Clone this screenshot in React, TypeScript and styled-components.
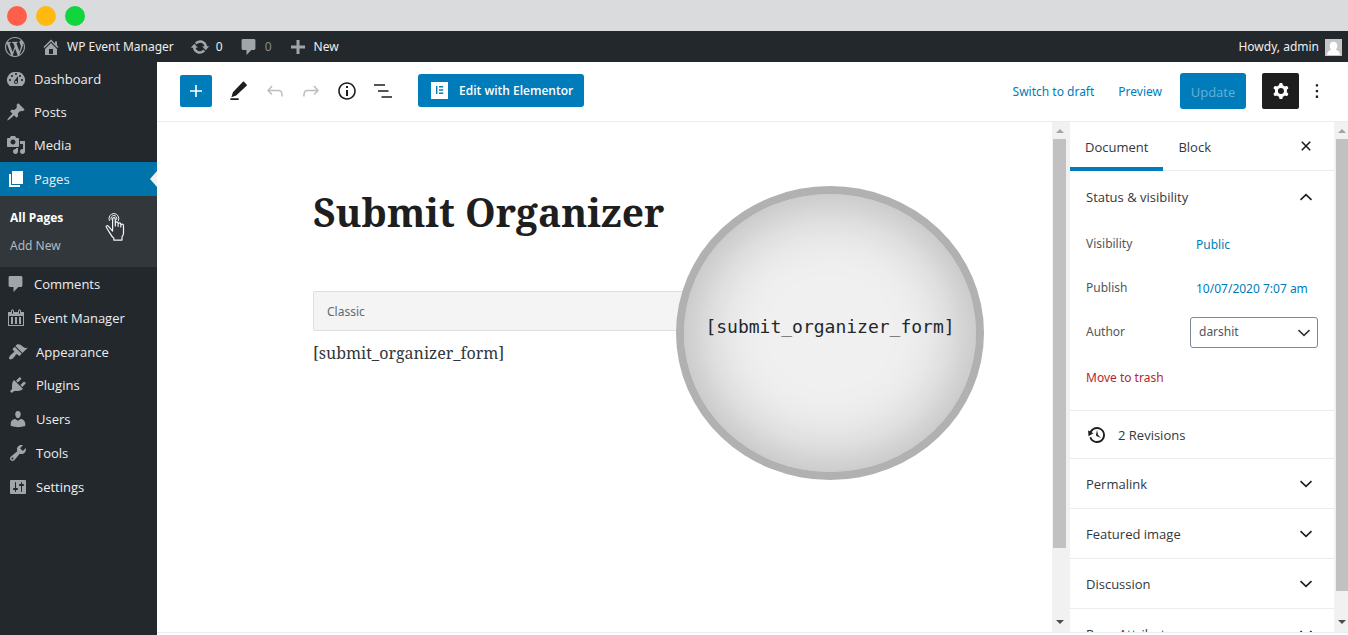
import React, { ReactNode } from "react";
import styled, { createGlobalStyle } from "styled-components";

const GlobalStyle = createGlobalStyle`
  *, *::before, *::after { box-sizing: border-box; }
  body {
    margin: 0;
    font-family: "Noto Sans", "Open Sans", sans-serif;
    font-size: 12px;
    line-height: 20px;
    color: #32373c;
    background: #fff;
  }
  button, select { font: inherit; color: inherit; }
  button { border: 0; padding: 0; background: none; cursor: pointer; }
  a { text-decoration: none; color: inherit; }
  ul { list-style: none; margin: 0; padding: 0; }
  svg { display: block; flex: none; }
`;

const paths = {
  wordpress:
    "M20 10c0-5.51-4.49-10-10-10C4.48 0 0 4.49 0 10c0 5.52 4.48 10 10 10 5.51 0 10-4.48 10-10zM7.78 15.37L4.37 6.22c.55-.02 1.17-.08 1.17-.08.5-.06.44-1.13-.06-1.11 0 0-1.45.11-2.37.11-.18 0-.37 0-.58-.01C4.12 2.69 6.87 1.11 10 1.11c2.33 0 4.45.87 6.05 2.34-.68-.11-1.65.39-1.65 1.58 0 .74.45 1.36.9 2.1.35.61.55 1.36.55 2.46 0 1.49-1.4 5-1.4 5l-3.03-8.37c.54-.02.82-.17.82-.17.5-.05.44-1.25-.06-1.22 0 0-1.44.12-2.38.12-.87 0-2.33-.12-2.33-.12-.5-.03-.56 1.2-.06 1.22l.92.08 1.26 3.41zM17.41 10c.24-.64.74-1.87.43-4.25.7 1.29 1.05 2.71 1.05 4.25 0 3.29-1.73 6.24-4.4 7.78.97-2.59 1.94-5.2 2.92-7.78zM6.1 18.09C3.12 16.65 1.11 13.53 1.11 10c0-1.3.23-2.48.72-3.59C3.25 10.3 4.67 14.2 6.1 18.09zm4.03-6.63l2.58 6.98c-.86.29-1.76.45-2.71.45-.79 0-1.57-.11-2.29-.33.81-2.38 1.62-4.74 2.42-7.1z",
  home: "M16 8.5l1.53 1.53-1.06 1.06L10 4.6l-6.47 6.49-1.06-1.06L10 2.5l4 4v-2h2v4zm-6-2.46l6 5.99V18H4v-5.97zM12 17v-5H8v5h4z",
  update:
    "M10.2 3.28c3.53 0 6.43 2.61 6.92 6h2.08l-3.5 4-3.5-4h2.32c-.45-1.97-2.21-3.45-4.32-3.45-1.45 0-2.73.71-3.54 1.78L4.95 5.66C6.23 4.2 8.11 3.28 10.2 3.28zm-.4 13.44c-3.52 0-6.43-2.61-6.92-6H.8l3.5-4c1.17 1.33 2.33 2.67 3.5 4H5.48c.45 1.97 2.21 3.45 4.32 3.45 1.45 0 2.73-.71 3.54-1.78l1.71 1.95c-1.28 1.46-3.15 2.38-5.25 2.38z",
  comments:
    "M4 2h11c.8 0 1.4.6 1.4 1.4v8.2c0 .8-.6 1.4-1.4 1.4h-2.6l-4.9 5v-5H4c-.8 0-1.4-.6-1.4-1.4V3.4C2.6 2.6 3.2 2 4 2z",
  plus: "M17 8.5v3h-5.5v5.5h-3v-5.5H3v-3h5.5V3h3v5.5z",
  dashboard:
    "M3.76 17h12.48A7.998 7.998 0 0 0 10 3a8 8 0 0 0-6.24 14zM10 4c.55 0 1 .45 1 1s-.45 1-1 1-1-.45-1-1 .45-1 1-1zM6 6c.55 0 1 .45 1 1s-.45 1-1 1-1-.45-1-1 .45-1 1-1zm8 0c.55 0 1 .45 1 1s-.45 1-1 1-1-.45-1-1 .45-1 1-1zm-5.37 5.55L12 7v6c0 1.1-.9 2-2 2s-2-.9-2-2c0-.57.24-1.08.63-1.45zM4 10c.55 0 1 .45 1 1s-.45 1-1 1-1-.45-1-1 .45-1 1-1zm12 0c.55 0 1 .45 1 1s-.45 1-1 1-1-.45-1-1 .45-1 1-1zm-5 3c0-.55-.45-1-1-1s-1 .45-1 1 .45 1 1 1 1-.45 1-1z",
  pin: "M10.44 3.02l1.82-1.82 6.36 6.35-1.83 1.82c-1.05-.68-2.48-.57-3.41.36l-.75.75c-.92.93-1.04 2.35-.35 3.41l-1.83 1.82-2.41-2.41-2.8 2.79c-.42.42-3.38 2.71-3.8 2.29s1.86-3.39 2.28-3.81l2.79-2.79L4.1 9.36l1.83-1.82c1.05.69 2.48.57 3.4-.36l.75-.75c.93-.92 1.05-2.35.36-3.41z",
  media:
    "M13 11V4c0-.55-.45-1-1-1h-1.67L9 1H5L3.67 3H2c-.55 0-1 .45-1 1v7c0 .55.45 1 1 1h10c.55 0 1-.45 1-1zM7 4.5c1.38 0 2.5 1.12 2.5 2.5S8.38 9.5 7 9.5 4.5 8.38 4.5 7 5.62 4.5 7 4.5zM14 6h5v10.5c0 1.38-1.12 2.5-2.5 2.5S14 17.88 14 16.5s1.12-2.5 2.5-2.5c.17 0 .34.02.5.05V9h-3V6zm-4 8.05V13h2v3.5c0 1.38-1.12 2.5-2.5 2.5S7 17.88 7 16.5 8.12 14 9.5 14c.17 0 .34.02.5.05z",
  page: "M6 15V2h11v13H6zm-1 1h9v2H3V5h2v11z",
  calendar:
    "M15 4h3v14H2V4h3V3c0-.83.67-1.5 1.5-1.5S8 2.17 8 3v1h4V3c0-.83.67-1.5 1.5-1.5S15 2.17 15 3v1zM6 3v2.5c0 .28.22.5.5.5s.5-.22.5-.5V3c0-.28-.22-.5-.5-.5S6 2.72 6 3zm7 0v2.5c0 .28.22.5.5.5s.5-.22.5-.5V3c0-.28-.22-.5-.5-.5s-.5.22-.5.5zm4 14V8H3v9h14zM7 16V9H5v7h2zm4 0V9H9v7h2zm4 0V9h-2v7h2z",
  appearance:
    "M14.48 11.06L7.41 3.99l1.5-1.5c.5-.56 2.3-.47 3.51.32 1.21.8 1.43 1.28 2.91 2.1 1.18.64 2.45 1.26 4.45.85zm-.71.71L6.7 4.7 4.93 6.47c-.39.39-.39 1.02 0 1.41l1.06 1.06c.39.39.39 1.03 0 1.42-.6.6-1.43 1.11-2.21 1.69-.35.26-.7.53-1.01.84C1.43 14.23.4 16.08 1.4 17.07c.99 1 2.84-.03 4.18-1.36.31-.31.58-.66.85-1.02.57-.78 1.08-1.61 1.69-2.21.39-.39 1.02-.39 1.41 0l1.06 1.06c.39.39 1.02.39 1.41 0z",
  plugins:
    "M13.11 4.36L9.87 7.6 8 5.73l3.24-3.24c.35-.34 1.05-.2 1.56.32.52.51.66 1.21.31 1.55zm-8 1.77l.91-1.12 9.01 9.01-1.19.84c-.71.71-2.63 1.16-3.82 1.16H6.14L4.9 17.26c-.59.59-1.54.59-2.12 0-.59-.58-.59-1.53 0-2.12l1.24-1.24v-3.88c0-1.13.4-3.19 1.09-3.89zm7.26 3.97l3.24-3.24c.34-.35 1.04-.21 1.55.31.52.51.66 1.21.31 1.55l-3.24 3.25z",
  users:
    "M10 9.25c-2.27 0-2.73-3.44-2.73-3.44C7 4.02 7.82 2 9.97 2c2.16 0 2.98 2.02 2.71 3.81 0 0-.41 3.44-2.68 3.44zm0 2.57L12.72 10c2.39 0 4.52 2.33 4.52 4.53v2.49s-3.65 1.13-7.24 1.13c-3.65 0-7.24-1.13-7.24-1.13v-2.49c0-2.25 1.94-4.48 4.47-4.48z",
  tools:
    "M16.68 9.77c-1.34 1.34-3.3 1.67-4.95.99l-5.41 6.52c-.99.99-2.59.99-3.58 0s-.99-2.59 0-3.57l6.52-5.42c-.68-1.65-.35-3.61.99-4.95 1.28-1.28 3.12-1.62 4.72-1.06l-2.89 2.89 2.82 2.82 2.86-2.87c.53 1.58.18 3.39-1.08 4.65zM3.81 16.21c.4.39 1.04.39 1.43 0 .4-.4.4-1.04 0-1.43-.39-.4-1.03-.4-1.43 0-.39.39-.39 1.03 0 1.43z",
  settings:
    "M18 16V4c0-.55-.45-1-1-1H3c-.55 0-1 .45-1 1v12c0 .55.45 1 1 1h14c.55 0 1-.45 1-1zM8 11h1c.55 0 1 .45 1 1s-.45 1-1 1H8v1.5c0 .28-.22.5-.5.5s-.5-.22-.5-.5V13H6c-.55 0-1-.45-1-1s.45-1 1-1h1V5.5c0-.28.22-.5.5-.5s.5.22.5.5V11zm5-2h-1c-.55 0-1-.45-1-1s.45-1 1-1h1V5.5c0-.28.22-.5.5-.5s.5.22.5.5V7h1c.55 0 1 .45 1 1s-.45 1-1 1h-1v5.5c0 .28-.22.5-.5.5s-.5-.22-.5-.5V9z",
  backup:
    "M13.65 2.88c3.93 2.01 5.48 6.84 3.47 10.77s-6.83 5.48-10.77 3.47c-1.87-.96-3.2-2.56-3.86-4.4l1.64-1.03c.45 1.57 1.52 2.95 3.08 3.76 3.01 1.54 6.69.35 8.23-2.66 1.55-3.01.36-6.69-2.65-8.24C9.78 3.01 6.1 4.2 4.56 7.21l1.88.97-4.95 3.08-.39-5.82 1.78.91C4.9 2.4 9.75.89 13.65 2.88zm-4.36 7.83C9.11 10.53 9 10.28 9 10c0-.07.03-.12.04-.19h-.01L10 5l.97 4.81L14 13l-4.5-2.12.02-.02c-.08-.04-.16-.09-.23-.15z",
};

type IconName = keyof typeof paths;

const Icon = ({ name, size = 20 }: { name: IconName; size?: number }) => (
  <svg width={size} height={size} viewBox="0 0 20 20" fill="currentColor" fillRule="evenodd" aria-hidden="true">
    <path d={paths[name]} />
  </svg>
);

const EditorIcon = ({ size = 24, children }: { size?: number; children: ReactNode }) => (
  <svg width={size} height={size} viewBox="0 0 24 24" fill="currentColor" fillRule="evenodd" aria-hidden="true">
    {children}
  </svg>
);

const Chevron = ({ up = false }: { up?: boolean }) => (
  <svg width="14" height="10" viewBox="0 0 14 10" fill="none" stroke="currentColor" strokeWidth="1.6" aria-hidden="true">
    <path d={up ? "M1.5 7.8L7 2.6l5.5 5.2" : "M1.5 2.2L7 7.4l5.5-5.2"} />
  </svg>
);

/* Frame */

const Screen = styled.div`
  display: flex;
  flex-direction: column;
  height: 100vh;
  overflow: hidden;
`;

const WindowBar = styled.div`
  display: flex;
  align-items: center;
  gap: 9px;
  flex: none;
  height: 31px;
  padding-left: 7px;
  background: #dadbdd;
`;

const Light = styled.span<{ $color: string }>`
  width: 20px;
  height: 20px;
  border-radius: 50%;
  background: ${(p) => p.$color};
`;

const AdminBar = styled.header`
  display: flex;
  align-items: center;
  justify-content: space-between;
  flex: none;
  height: 31px;
  padding: 0 6px 0 5px;
  background: #23282d;
  color: #eee;
`;

const AdminGroup = styled.nav`
  display: flex;
  align-items: center;
  gap: 16px;
`;

const AdminLink = styled.a<{ $dim?: boolean }>`
  display: flex;
  align-items: center;
  gap: 6px;
  padding-top: 1px;
  color: ${(p) => (p.$dim ? "#8a8e92" : "#eee")};
  svg { color: #a0a5aa; }
`;

const Body = styled.div`
  display: flex;
  flex: 1;
  min-height: 0;
`;

/* Admin menu */

const Menu = styled.nav`
  flex: none;
  width: 157px;
  background: #23282d;
  color: #eee;
`;

const MenuLink = styled.a<{ $short?: boolean; $inset?: boolean; $current?: boolean }>`
  position: relative;
  display: flex;
  align-items: center;
  gap: 8px;
  height: ${(p) => (p.$short ? 33 : 34)}px;
  padding-left: ${(p) => (p.$inset ? 8 : 6)}px;
  font-family: "Open Sans", "Noto Sans", sans-serif;
  font-size: 13px;
  background: ${(p) => (p.$current ? "#0073aa" : "transparent")};
  svg { color: ${(p) => (p.$current ? "#fff" : "#a0a5aa")}; }
  &::after {
    content: "";
    display: ${(p) => (p.$current ? "block" : "none")};
    position: absolute;
    right: 0;
    top: 9px;
    border: 8px solid transparent;
    border-left: 0;
    border-right: 7px solid #f1f1f1;
  }
`;

const SubMenu = styled.ul`
  position: relative;
  height: 71px;
  padding: 8px 10px;
  background: #32373c;
`;

const SubLink = styled.a<{ $current?: boolean }>`
  display: block;
  line-height: 28px;
  font-family: ${(p) => (p.$current ? '"Open Sans"' : '"Noto Sans"')}, sans-serif;
  font-weight: ${(p) => (p.$current ? 700 : 400)};
  color: ${(p) => (p.$current ? "#fff" : "#b4b9be")};
`;

const Pointer = styled.svg`
  position: absolute;
  top: 17px;
  right: 32px;
`;

/* Editor */

const Editor = styled.main`
  display: flex;
  flex-direction: column;
  flex: 1;
  min-width: 0;
  padding-bottom: 2px;
  background: #fff;
`;

const Toolbar = styled.div`
  display: flex;
  align-items: center;
  justify-content: space-between;
  flex: none;
  height: 60px;
  padding: 0 19px 2px 23px;
  border-bottom: 1px solid #ebecee;
`;

const ToolGroup = styled.div`
  display: flex;
  align-items: center;
`;

const InsertButton = styled.button`
  display: grid;
  place-items: center;
  width: 32px;
  height: 32px;
  margin-right: 9px;
  border-radius: 2px;
  background: #007cba;
  color: #fff;
`;

const ToolButton = styled.button<{ $off?: boolean }>`
  display: grid;
  place-items: center;
  width: 36px;
  height: 36px;
  color: ${(p) => (p.$off ? "#bdbdbd" : "#1e1e1e")};
`;

const ElementorButton = styled.button`
  display: flex;
  align-items: center;
  gap: 11px;
  width: 166px;
  height: 33px;
  margin-left: 17px;
  padding-left: 13px;
  border-radius: 3px;
  background: #007cba;
  color: #fff;
  font-family: "Open Sans", "Noto Sans", sans-serif;
  font-weight: 600;
`;

const TextButton = styled.button`
  margin-right: 24px;
  padding-top: 3px;
  color: #007cba;
`;

const UpdateButton = styled.button`
  width: 66px;
  height: 36px;
  margin: 0 16px 0 -6px;
  padding-top: 2px;
  border-radius: 3px;
  background: #007cba;
  color: #66b0d6;
  font-family: "Open Sans", "Noto Sans", sans-serif;
  font-size: 13px;
`;

const GearButton = styled.button`
  display: grid;
  place-items: center;
  width: 37px;
  height: 36px;
  margin-right: 6px;
  border-radius: 2px;
  background: #1e1e1e;
  color: #fff;
`;

const MoreButton = styled.button`
  display: grid;
  place-items: center;
  width: 24px;
  height: 36px;
  color: #1e1e1e;
`;

const Workspace = styled.div`
  display: flex;
  flex: 1;
  min-height: 0;
  border-bottom: 1px solid #ebecee;
`;

const Canvas = styled.section`
  position: relative;
  flex: 1;
  min-width: 0;
  padding: 62px 156px 0;
`;

const Title = styled.h1`
  margin: 0;
  font: 700 39px/56px "Noto Serif", "Liberation Serif", serif;
  color: #1e1e1e;
`;

const ClassicBar = styled.div`
  height: 40px;
  margin-top: 51px;
  padding: 1px 0 0 13px;
  border: 1px solid #dcdee0;
  border-radius: 2px;
  background: #f4f4f4;
  color: #626a72;
  line-height: 38px;
`;

const Paragraph = styled.p`
  margin: 8px 0 0;
  font: 16px/28px "Noto Serif", "Liberation Serif", serif;
  color: #32373c;
`;

const Lens = styled.div`
  position: absolute;
  top: 64px;
  right: 68px;
  display: grid;
  place-items: center;
  width: 308px;
  height: 294px;
  padding-bottom: 12px;
  border: 8px solid #b1b1b1;
  border-radius: 50%;
  background: #f0f0f0;
  box-shadow: inset 0 0 72px rgba(0, 0, 0, 0.28);
  font: 18px/24px "DejaVu Sans Mono", "Liberation Mono", monospace;
  color: #23282d;
`;

const Scroll = styled.div<{ $wide?: boolean }>`
  display: flex;
  flex-direction: column;
  align-items: center;
  flex: none;
  width: ${(p) => (p.$wide ? 18 : 14)}px;
  padding: ${(p) => (p.$wide ? "7px 4px 8px 1px" : "7px 0 8px 2px")};
  background: #f1f1f1;
`;

const Thumb = styled.div<{ $share: number }>`
  width: 100%;
  flex: ${(p) => p.$share};
  margin-top: 6px;
  background: #c1c1c1;
`;

const Gap = styled.div<{ $share: number }>`
  flex: ${(p) => p.$share};
`;

const Arrow = styled.span<{ $down?: boolean }>`
  border: 4px solid transparent;
  border-top: ${(p) => (p.$down ? "4px solid #4d4d4d" : "0")};
  border-bottom: ${(p) => (p.$down ? "0" : "4px solid #a3a3a3")};
`;

/* Settings panel */

const Panel = styled.aside`
  flex: none;
  width: 264px;
  overflow: hidden;
  color: #32373c;
`;

const Tabs = styled.div`
  display: flex;
  align-items: center;
  height: 49px;
  border-bottom: 1px solid #ebecee;
`;

const Tab = styled.button<{ $active?: boolean }>`
  height: 49px;
  padding: ${(p) => (p.$active ? "5px 15px 0" : "1px 15px 0")};
  border-bottom: ${(p) => (p.$active ? "4px solid #007cba" : "0")};
  font-family: "Open Sans", "Noto Sans", sans-serif;
  font-size: 13px;
`;

const CloseButton = styled.button`
  display: grid;
  place-items: center;
  width: 24px;
  height: 24px;
  margin: 0 16px 0 auto;
  color: #1e1e1e;
`;

const Section = styled.section`
  padding: 0 16px;
  border-bottom: 1px solid #ebecee;
`;

const SectionToggle = styled.button<{ $open?: boolean }>`
  display: flex;
  align-items: center;
  justify-content: space-between;
  width: 100%;
  height: ${(p) => (p.$open ? 51 : 49)}px;
  padding-right: 5px;
  font-family: "Open Sans", "Noto Sans", sans-serif;
  font-size: 13px;
  text-align: left;
  svg { color: #1e1e1e; }
`;

const Row = styled.div`
  display: flex;
  align-items: center;
  height: 44px;
`;

const RowLabel = styled.label`
  flex: 1;
  color: #50565c;
`;

const RowValue = styled.button`
  width: 122px;
  padding-top: 2px;
  text-align: left;
  color: #007cba;
`;

const SelectBox = styled.div`
  position: relative;
  width: 128px;
  svg {
    position: absolute;
    right: 7px;
    top: 11px;
    pointer-events: none;
  }
`;

const Select = styled.select`
  appearance: none;
  width: 100%;
  height: 31px;
  padding: 0 24px 0 8px;
  border: 1px solid #7e8993;
  border-radius: 3px;
  background: #fff;
  color: #50565c;
`;

const TrashButton = styled.button`
  display: block;
  height: 20px;
  margin: 14px 0 22px;
  color: #b52727;
`;

const Revisions = styled.button`
  display: flex;
  align-items: center;
  gap: 11px;
  height: 47px;
  padding-left: 1px;
  font-family: "Open Sans", "Noto Sans", sans-serif;
  font-size: 13px;
  svg { color: #1e1e1e; }
`;

type MenuEntry = { label: string; icon: IconName; short?: boolean; inset?: boolean };

const upperMenu: MenuEntry[] = [
  { label: "Dashboard", icon: "dashboard", short: true },
  { label: "Posts", icon: "pin", short: true },
  { label: "Media", icon: "media" },
];

const lowerMenu: MenuEntry[] = [
  { label: "Comments", icon: "comments" },
  { label: "Event Manager", icon: "calendar" },
  { label: "Appearance", icon: "appearance", short: true, inset: true },
  { label: "Plugins", icon: "plugins", inset: true },
  { label: "Users", icon: "users", inset: true },
  { label: "Tools", icon: "tools", inset: true },
  { label: "Settings", icon: "settings", inset: true },
];

const MenuItem = ({ entry }: { entry: MenuEntry }) => (
  <li>
    <MenuLink href="#" $short={entry.short} $inset={entry.inset}>
      <Icon name={entry.icon} />
      {entry.label}
    </MenuLink>
  </li>
);

const undoPath =
  "M18.3 11.7c-.6-.6-1.4-.9-2.3-.9H6.7l2.9-3.3-1.1-1-4.5 5L8.5 16l1-1-2.7-2.7H16c.5 0 .9.2 1.3.5 1 1 1 3.4 1 4.5v.3h1.5v-.2c0-1.5 0-4.3-1.5-5.7z";

function AdminMenu() {
  return (
    <Menu aria-label="Main menu">
      <ul>
        {upperMenu.map((m) => <MenuItem key={m.label} entry={m} />)}
        <li>
          <MenuLink href="#" $current>
            <Icon name="page" />
            Pages
          </MenuLink>
          <SubMenu>
            <li><SubLink href="#" $current>All Pages</SubLink></li>
            <li><SubLink href="#">Add New</SubLink></li>
            <Pointer width="20" height="29" viewBox="0 0 20 29" fill="none" stroke="#f4f4f4" strokeWidth="1.2" strokeLinejoin="round" strokeLinecap="round" aria-hidden="true">
              <path d="M4.3 7.5a5 5 0 1 1 9.2 0M6 6.3a3 3 0 1 1 5.8 0" strokeWidth="1" />
              <path d="M7.6 17.5V6a1.3 1.3 0 0 1 2.7 0v7V10.3a1.4 1.4 0 0 1 2.8 0v3-2a1.3 1.3 0 0 1 2.7 0v2.6-1.4a1.3 1.3 0 0 1 2.7 0v7.8c0 1.7-.6 2.5-1.5 3.6v3.2H8.8v-2.2c-1.8-1-2.8-2.7-3.9-4.8L1.3 14.3c-.6-1.5 1-2.2 2-1.2l4.3 5" />
            </Pointer>
          </SubMenu>
        </li>
        {lowerMenu.map((m) => <MenuItem key={m.label} entry={m} />)}
      </ul>
    </Menu>
  );
}

function EditorToolbar() {
  return (
    <Toolbar>
      <ToolGroup>
        <InsertButton aria-label="Add block">
          <svg width="12" height="12" viewBox="0 0 12 12" stroke="currentColor" strokeWidth="1.6"><path d="M6 0v12M0 6h12" /></svg>
        </InsertButton>
        <ToolButton aria-label="Edit">
          <EditorIcon>
            <path d="M17 2.8l2.6 2.6c.5.5.5.8 0 1.3L9.2 16.6 4.4 18.2l1.5-4.9L15.7 2.9c.5-.5.9-.5 1.3-.1zM3.4 19.3h8.3v1.6H3.4z" />
          </EditorIcon>
        </ToolButton>
        <ToolButton aria-label="Undo" $off>
          <EditorIcon><path d={undoPath} /></EditorIcon>
        </ToolButton>
        <ToolButton aria-label="Redo" $off>
          <EditorIcon><path d={undoPath} transform="translate(24 0) scale(-1 1)" /></EditorIcon>
        </ToolButton>
        <ToolButton aria-label="Details">
          <EditorIcon>
            <path d="M12 3.2c-4.8 0-8.8 3.9-8.8 8.8 0 4.8 3.9 8.8 8.8 8.8 4.8 0 8.8-3.9 8.8-8.8 0-4.8-4-8.8-8.8-8.8zm0 16c-4 0-7.2-3.3-7.2-7.2C4.8 8 8 4.8 12 4.8s7.2 3.3 7.2 7.2c0 4-3.2 7.2-7.2 7.2zM11 17h2v-6h-2v6zm0-8h2V7h-2v2z" />
          </EditorIcon>
        </ToolButton>
        <ToolButton aria-label="Outline">
          <EditorIcon><path d="M3 5.2h11v1.5H3zM7 11.2h10.5v1.5H7zM10.5 17.2H21v1.5H10.5z" /></EditorIcon>
        </ToolButton>
        <ElementorButton>
          <svg width="17" height="17" viewBox="0 0 17 17" aria-hidden="true">
            <path fill="#fff" d="M0 0h17v17H0z" />
            <path fill="#007cba" d="M5 4h1.4v8H5zM8 4h4.2v1.4H8zM8 7.3h4.2v1.4H8zM8 10.6h4.2v1.4H8z" />
          </svg>
          Edit with Elementor
        </ElementorButton>
      </ToolGroup>
      <ToolGroup>
        <TextButton>Switch to draft</TextButton>
        <TextButton>Preview</TextButton>
        <UpdateButton>Update</UpdateButton>
        <GearButton aria-label="Settings">
          <EditorIcon>
            <path d="M10.289 4.836A1 1 0 0111.275 4h1.306a1 1 0 01.987.836l.244 1.466c.787.26 1.503.679 2.108 1.218l1.393-.522a1 1 0 011.216.437l.653 1.13a1 1 0 01-.23 1.273l-1.148.944a6.025 6.025 0 010 2.435l1.149.946a1 1 0 01.23 1.272l-.653 1.13a1 1 0 01-1.216.437l-1.394-.522c-.605.54-1.32.958-2.108 1.218l-.244 1.466a1 1 0 01-.987.836h-1.306a1 1 0 01-.986-.836l-.244-1.466a5.995 5.995 0 01-2.108-1.218l-1.394.522a1 1 0 01-1.217-.436l-.653-1.131a1 1 0 01.23-1.272l1.149-.946a6.026 6.026 0 010-2.435l-1.148-.944a1 1 0 01-.23-1.272l.653-1.131a1 1 0 011.217-.437l1.393.522a5.994 5.994 0 012.108-1.218l.244-1.466zM14.929 12a3 3 0 11-6 0 3 3 0 016 0z" />
          </EditorIcon>
        </GearButton>
        <MoreButton aria-label="Options">
          <svg width="4" height="16" viewBox="0 0 4 16" fill="currentColor"><path d="M.8 1.2h2.3v2.3H.8zM.8 6.9h2.3v2.3H.8zM.8 12.6h2.3v2.3H.8z" /></svg>
        </MoreButton>
      </ToolGroup>
    </Toolbar>
  );
}

function SettingsPanel() {
  return (
    <Panel>
      <Tabs>
        <Tab $active>Document</Tab>
        <Tab>Block</Tab>
        <CloseButton aria-label="Close settings">
          <svg width="10" height="10" viewBox="0 0 10 10" stroke="currentColor" strokeWidth="1.6"><path d="M.8.8l8.4 8.4M9.2.8L.8 9.2" /></svg>
        </CloseButton>
      </Tabs>
      <Section>
        <SectionToggle $open>Status &amp; visibility<Chevron up /></SectionToggle>
        <Row>
          <RowLabel htmlFor="visibility">Visibility</RowLabel>
          <RowValue id="visibility">Public</RowValue>
        </Row>
        <Row>
          <RowLabel htmlFor="publish">Publish</RowLabel>
          <RowValue id="publish">10/07/2020 7:07 am</RowValue>
        </Row>
        <Row>
          <RowLabel htmlFor="author">Author</RowLabel>
          <SelectBox>
            <Select id="author" defaultValue="darshit"><option>darshit</option></Select>
            <Chevron />
          </SelectBox>
        </Row>
        <TrashButton>Move to trash</TrashButton>
      </Section>
      <Section>
        <Revisions><Icon name="backup" />2 Revisions</Revisions>
      </Section>
      {["Permalink", "Featured image", "Discussion", "Page Attributes"].map((s) => (
        <Section key={s}>
          <SectionToggle>{s}<Chevron /></SectionToggle>
        </Section>
      ))}
    </Panel>
  );
}

const Avatar = () => (
  <svg width="17" height="17" viewBox="0 0 17 17" aria-hidden="true">
    <path fill="#c6c6c6" d="M0 0h17v17H0z" />
    <path fill="#fff" d="M8.5 2.8c2.5 0 3.8 1.8 3.8 4 0 1.7-.7 3-1.5 3.9 2.4.7 4 2.2 4.2 5.3H2c.2-3.1 1.8-4.6 4.2-5.3-.8-.9-1.5-2.2-1.5-3.9 0-2.2 1.3-4 3.8-4z" />
  </svg>
);

export default function App() {
  return (
    <>
      <GlobalStyle />
      <Screen>
        <WindowBar>
          <Light $color="#ff5f4a" />
          <Light $color="#ffb90f" />
          <Light $color="#10d53c" />
        </WindowBar>
        <AdminBar>
          <AdminGroup aria-label="Toolbar">
            <AdminLink href="#" aria-label="About WordPress"><Icon name="wordpress" /></AdminLink>
            <AdminLink href="#"><Icon name="home" />WP Event Manager</AdminLink>
            <AdminLink href="#"><Icon name="update" />0</AdminLink>
            <AdminLink href="#" $dim><Icon name="comments" />0</AdminLink>
            <AdminLink href="#"><Icon name="plus" />New</AdminLink>
          </AdminGroup>
          <AdminLink href="#">Howdy, admin<Avatar /></AdminLink>
        </AdminBar>
        <Body>
          <AdminMenu />
          <Editor>
            <EditorToolbar />
            <Workspace>
              <Canvas>
                <Title>Submit Organizer</Title>
                <ClassicBar>Classic</ClassicBar>
                <Paragraph>[submit_organizer_form]</Paragraph>
                <Lens>[submit_organizer_form]</Lens>
              </Canvas>
              <Scroll $wide aria-hidden="true">
                <Arrow />
                <Thumb $share={85} />
                <Gap $share={15} />
                <Arrow $down />
              </Scroll>
              <SettingsPanel />
              <Scroll aria-hidden="true">
                <Arrow />
                <Thumb $share={94} />
                <Gap $share={6} />
                <Arrow $down />
              </Scroll>
            </Workspace>
          </Editor>
        </Body>
      </Screen>
    </>
  );
}
